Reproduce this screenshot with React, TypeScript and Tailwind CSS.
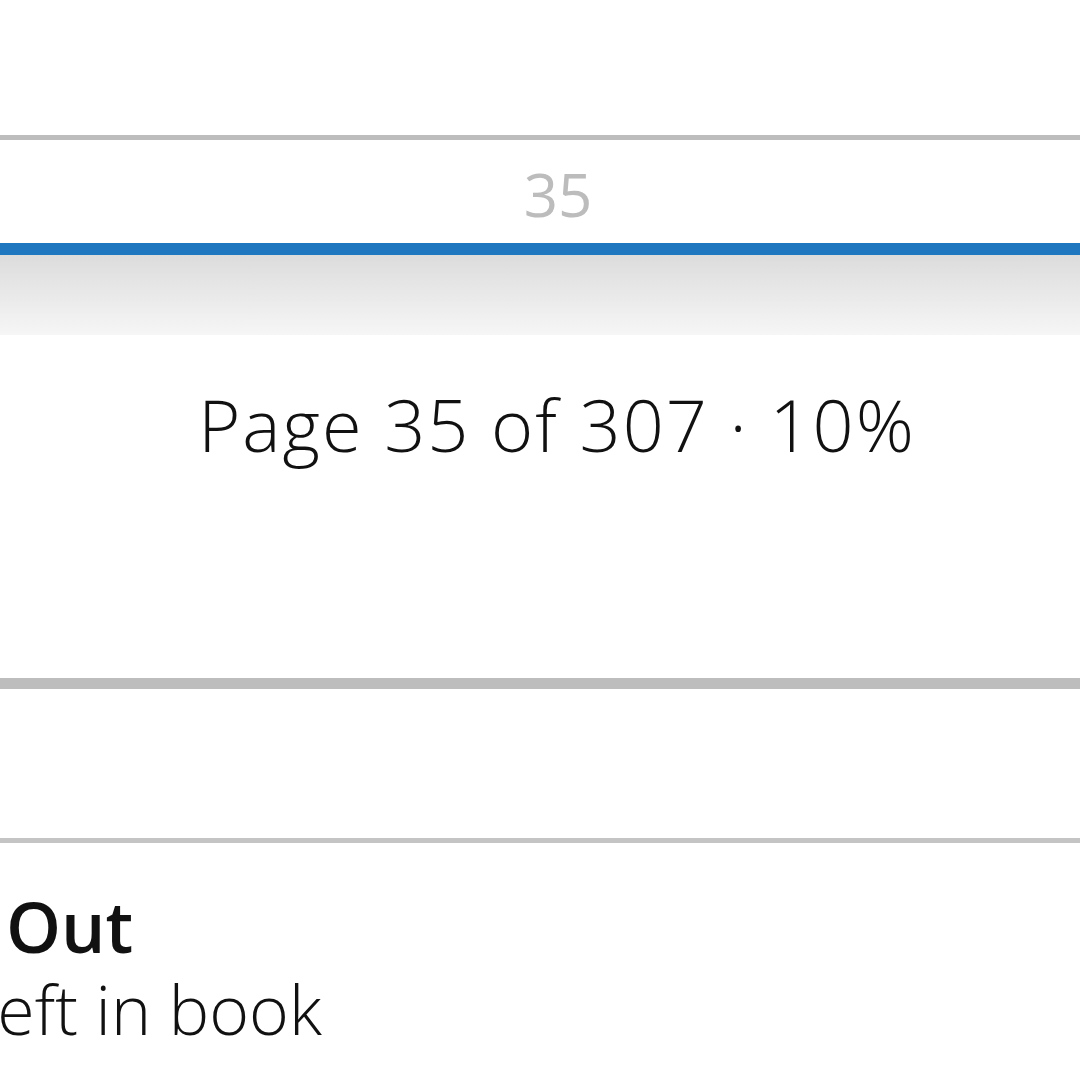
import React from 'react';

export default function App() {
  return (
    <div className="w-[1080px] h-[1080px] overflow-hidden bg-white flex flex-col" style={{ fontFamily: '"Open Sans", "Noto Sans", sans-serif' }}>
      {/* top spacer */}
      <div className="h-[135px] shrink-0 bg-white" />
      <div className="h-[5px] shrink-0 bg-[#bdbdbd]" />

      {/* page number strip */}
      <div className="h-[103px] shrink-0 flex items-center justify-center bg-white">
        <span className="text-[60px] leading-none text-[#bcbcbc] pl-[36px] pt-[4px]">35</span>
      </div>

      {/* progress bar */}
      <div className="h-[12px] shrink-0 bg-[#1f77c0]" />
      <div className="h-[80px] shrink-0 bg-gradient-to-b from-[#dcdcdd] to-[#f6f6f6]" />

      {/* location info */}
      <div className="h-[343px] shrink-0 flex justify-center bg-white">
        <p className="mt-[53px] text-[72px] leading-none font-light tracking-[2px] text-[#111] pl-[34px]">Page 35 of 307 · 10%</p>
      </div>

      <div className="h-[11px] shrink-0 bg-[#bdbdbd]" />
      <div className="h-[149px] shrink-0 bg-white" />
      <div className="h-[5px] shrink-0 bg-[#c4c4c4]" />

      {/* chapter row */}
      <div className="flex-1 overflow-hidden pt-[40px]">
        <p className="text-[70px] leading-[86px] font-semibold text-[#111] pl-[6px]">Out</p>
        <p className="text-[68px] leading-[80px] font-light text-[#111] -ml-[18px] whitespace-nowrap">left in book</p>
      </div>
    </div>
  );
}
